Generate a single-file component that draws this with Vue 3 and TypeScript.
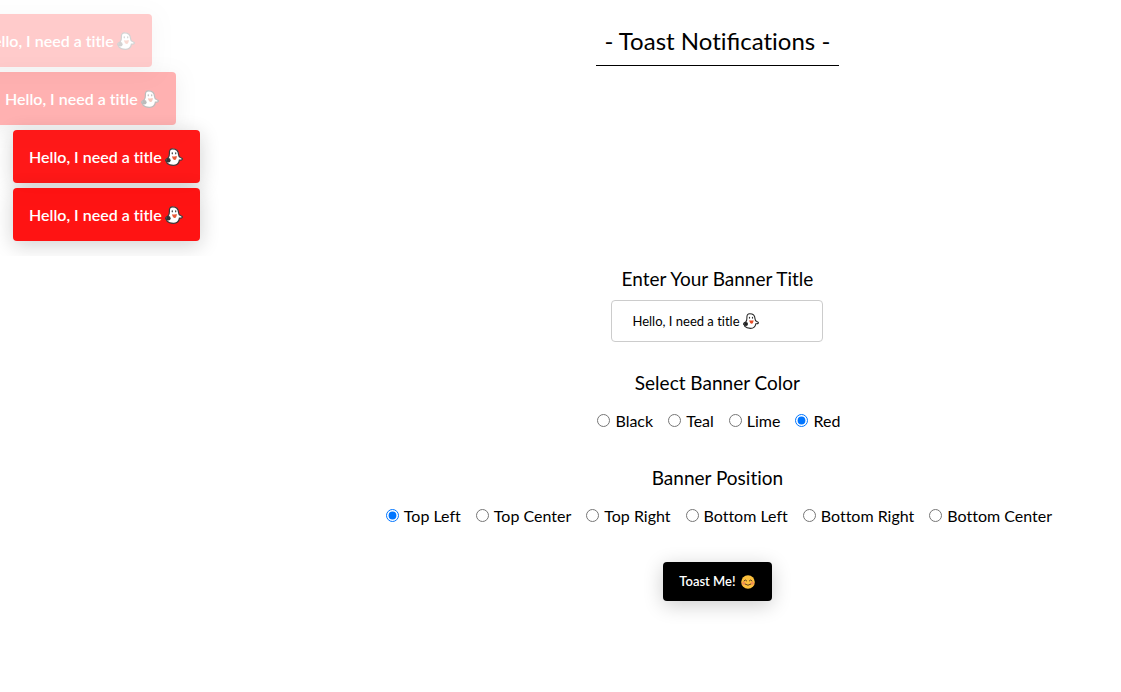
<script setup lang="ts">
import { ref } from 'vue'

interface Toast {
  id: number
  state: string
}

const title = ref('Hello, I need a title')
const color = ref('Red')
const position = ref('Top Left')
const colors = ['Black', 'Teal', 'Lime', 'Red']
const positions = ['Top Left', 'Top Center', 'Top Right', 'Bottom Left', 'Bottom Right', 'Bottom Center']
const toasts = ref<Toast[]>([
  { id: 1, state: 'leaving-last' },
  { id: 2, state: 'leaving' },
  { id: 3, state: 'shown' },
  { id: 4, state: 'shown newest' },
])

function addToast() {
  toasts.value.push({ id: Date.now(), state: 'shown' })
}
</script>

<template>
  <div class="page">
    <aside class="toasts" aria-live="polite">
      <div v-for="toast in toasts" :key="toast.id" class="toast" :class="toast.state">
        <span>{{ title }}</span>
        <svg class="ghost" viewBox="0 0 18 18" aria-hidden="true">
          <path d="M4.400 5.500C4.200 2.500 5.200.8 7.600.8c3.300 0 5.700 1.800 5.900 5.500.1 1.800.7 2.700 1.900 3.200 1.100.4 2.200.9 1.900 1.700-.3.800-1.600 1-2.900.9-.4 3.300-2.600 5.200-6 5.200-2.600 0-4.900-.6-6.300-2.200-.6-.7-.3-1.200.4-1.300-1.500-.1-2.200-1-1.700-2 .5-1 1.500-.9 2.300-1.800.9-1 1.300-2.400 1.300-4.500z" fill="#fff" stroke="#292929" stroke-width="1.200" />
          <circle cx="3.400" cy="12.300" r="2.200" fill="#222" />
          <ellipse cx="7.300" cy="5.300" rx=".7" ry="1.100" fill="#333" />
          <ellipse cx="10.700" cy="5.300" rx=".7" ry="1.100" fill="#333" />
          <path d="M7 8.200q2.600.8 4.800-.1c.1 2.200-.9 4-2 4-1.300 0-2.500-1.800-2.800-3.900z" fill="#e64b27" />
        </svg>
      </div>
    </aside>

    <main class="content">
      <h1>- Toast Noti<span class="ligature">fi</span>cations -</h1>

      <form @submit.prevent="addToast">
        <section class="group">
          <h2><label for="banner-title">Enter Your Banner Title</label></h2>
          <div class="field">
            <input id="banner-title" v-model="title" type="text" />
            <svg class="ghost" viewBox="0 0 18 18" aria-hidden="true">
              <path d="M4.400 5.500C4.200 2.500 5.200.8 7.600.8c3.300 0 5.700 1.800 5.900 5.500.1 1.800.7 2.700 1.900 3.200 1.100.4 2.200.9 1.900 1.700-.3.800-1.600 1-2.900.9-.4 3.300-2.600 5.200-6 5.200-2.600 0-4.900-.6-6.300-2.200-.6-.7-.3-1.200.4-1.300-1.500-.1-2.200-1-1.700-2 .5-1 1.500-.9 2.300-1.800.9-1 1.300-2.400 1.300-4.500z" fill="#fff" stroke="#292929" stroke-width="1.200" />
              <circle cx="3.400" cy="12.300" r="2.200" fill="#222" />
              <ellipse cx="7.300" cy="5.300" rx=".7" ry="1.100" fill="#333" />
              <ellipse cx="10.700" cy="5.300" rx=".7" ry="1.100" fill="#333" />
              <path d="M7 8.200q2.600.8 4.800-.1c.1 2.200-.9 4-2 4-1.300 0-2.500-1.800-2.800-3.900z" fill="#e64b27" />
            </svg>
          </div>
        </section>

        <section class="group">
          <h2 id="color-heading">Select Banner Color</h2>
          <div class="options" role="radiogroup" aria-labelledby="color-heading">
            <label v-for="item in colors" :key="item">
              <input v-model="color" type="radio" name="color" :value="item" />{{ item }}
            </label>
          </div>
        </section>

        <section class="group">
          <h2 id="position-heading">Banner Position</h2>
          <div class="options" role="radiogroup" aria-labelledby="position-heading">
            <label v-for="item in positions" :key="item">
              <input v-model="position" type="radio" name="position" :value="item" />{{ item }}
            </label>
          </div>
        </section>

        <button type="submit">
          <span>Toast Me!</span>
          <svg class="smile" viewBox="0 0 14 14" aria-hidden="true">
            <circle cx="7" cy="7" r="6.800" fill="#fcc03d" />
            <circle cx="2.700" cy="8.200" r="1.700" fill="#f59352" />
            <circle cx="11.300" cy="8.200" r="1.700" fill="#f59352" />
            <path d="M3 5.800q1.300-1.900 2.700 0M8.300 5.800q1.400-1.900 2.700 0M4.200 9.200q2.800 2.300 5.600 0" fill="none" stroke="#5b4023" stroke-width="1" stroke-linecap="round" />
          </svg>
        </button>
      </form>
    </main>
  </div>
</template>

<style>
body {
  margin: 0;
  background: #fff;
}
</style>

<style scoped>
.page {
  display: grid;
  grid-template-columns: 28fr 72fr;
  min-height: 100vh;
  overflow: hidden;
  color: #000;
  font-family: Lato, "Liberation Sans", sans-serif;
  font-size: 16px;
  font-variant-ligatures: none;
}

.ligature {
  font-variant-ligatures: common-ligatures;
}

.toasts {
  display: flex;
  flex-direction: column;
  align-items: flex-start;
  align-self: start;
  gap: 5px;
  padding: 14px 13px 15px;
  overflow: hidden;
}

.toast {
  display: flex;
  align-items: center;
  gap: 3px;
  padding: 16px 17px 16px 16px;
  border-radius: 4px;
  background: #f00;
  box-shadow: 0 4px 20px rgba(0, 0, 0, 0.2);
  color: #fff;
  font-weight: 600;
  line-height: 21px;
  white-space: nowrap;
}

.shown {
  opacity: 0.9;
}

.newest {
  opacity: 0.92;
}

.leaving {
  opacity: 0.3;
  transform: translateX(-24px);
}

.leaving-last {
  opacity: 0.2;
  transform: translateX(-48px);
}

.ghost {
  display: block;
  flex: none;
  width: 18px;
  height: 18px;
}

.content {
  display: flex;
  flex-direction: column;
  align-items: center;
  min-width: 0;
  padding: 18px 0 40px;
}

h1 {
  margin: 0;
  padding: 7px 9px 9px;
  border-bottom: 1px solid #000;
  font-size: 24px;
  font-weight: 400;
  line-height: 31px;
}

form {
  display: flex;
  flex-direction: column;
  align-items: center;
  gap: 28px;
  margin-top: 200px;
}

.group {
  display: flex;
  flex-direction: column;
  align-items: center;
}

h2 {
  margin: 0;
  font-size: 19px;
  font-weight: 400;
  line-height: 26px;
}

.field {
  position: relative;
  margin-top: 8px;
}

.field input {
  box-sizing: border-box;
  display: block;
  width: 212px;
  height: 42px;
  padding: 0 20px;
  border: 1px solid #ccc;
  border-radius: 4px;
  background: #fff;
  color: #000;
  font: 400 13px Lato, "Liberation Sans", sans-serif;
  font-variant-ligatures: none;
}

.field .ghost {
  position: absolute;
  top: 13px;
  left: 132px;
  width: 16px;
  height: 16px;
}

.options {
  display: flex;
  flex-wrap: wrap;
  justify-content: center;
  gap: 15px;
  padding: 15px 0 6px 3px;
  line-height: 20px;
}

.options label {
  display: flex;
  align-items: center;
}

.options input {
  width: 13px;
  height: 13px;
  margin: 0 5px 2px 0;
  accent-color: #0075ff;
}

button {
  display: flex;
  align-items: center;
  gap: 5px;
  margin-top: 2px;
  padding: 11px 17px 11px 16px;
  border: 0;
  border-radius: 4px;
  background: #000;
  box-shadow: 0 4px 20px rgba(0, 0, 0, 0.2);
  color: #fff;
  font: 600 13px/17px Lato, "Liberation Sans", sans-serif;
  cursor: pointer;
}

.smile {
  display: block;
  width: 14px;
  height: 14px;
}
</style>
